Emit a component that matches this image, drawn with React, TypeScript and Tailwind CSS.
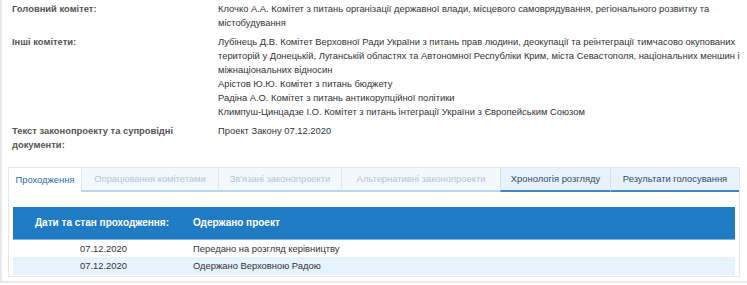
export default function App() {
  const info = [
    {
      label: "Головний комітет:",
      lines: [
        "Клочко А.А. Комітет з питань організації державної влади, місцевого самоврядування, регіонального розвитку та містобудування",
      ],
    },
    {
      label: "Інші комітети:",
      lines: [
        "Лубінець Д.В. Комітет Верховної Ради України з питань прав людини, деокупації та реінтеграції тимчасово окупованих територій у Донецькій, Луганській областях та Автономної Республіки Крим, міста Севастополя, національних меншин і міжнаціональних відносин",
        "Арістов Ю.Ю. Комітет з питань бюджету",
        "Радіна А.О. Комітет з питань антикорупційної політики",
        "Климпуш-Цинцадзе І.О. Комітет з питань інтеграції України з Європейським Союзом",
      ],
    },
    {
      label: "Текст законопроекту та супровідні документи:",
      lines: ["Проект Закону 07.12.2020"],
    },
  ];

  const tabs = [
    { name: "Проходження", w: "w-[72px]", kind: "active" },
    { name: "Опрацювання комітетами", w: "w-[137px]", kind: "off" },
    { name: "Зв'язані законопроекти", w: "w-[123px]", kind: "off" },
    { name: "Альтернативні законопроекти", w: "w-[159px]", kind: "off" },
    { name: "Хронологія розгляду", w: "w-[110px]", kind: "on" },
    { name: "Результати голосування", w: "w-[129px]", kind: "on" },
  ];

  const rows = [
    { date: "07.12.2020", text: "Передано на розгляд керівництву" },
    { date: "07.12.2020", text: "Одержано Верховною Радою" },
  ];

  return (
    <div className="h-[285px] w-[747px] overflow-hidden bg-white font-['Liberation_Sans',Arial,sans-serif] text-[9.4px] leading-[14px]">
      <div className="h-[283px] border-b-2 border-l-2 border-[#e8e8e8] pt-[2px]">
        <div className="flex flex-col gap-[5px] pl-[10px] pr-[4px]">
          {info.map((item) => (
            <div key={item.label} className="grid grid-cols-[206px_1fr]">
              <div className="pr-[36px] font-bold text-[#555]">{item.label}</div>
              <div className="text-[#333]">
                {item.lines.map((l) => (
                  <div key={l}>{l}</div>
                ))}
              </div>
            </div>
          ))}
        </div>

        <div className="ml-[6px] mt-[15px] w-[732px] border border-[#e6e6e6]">
          <div className="flex h-[24px]">
            {tabs.map((t) => (
              <div
                key={t.name}
                className={
                  t.kind === "active"
                    ? `${t.w} flex items-center justify-center bg-white text-[#2a6ea8]`
                    : t.kind === "off"
                    ? `${t.w} flex items-center justify-center border-b-2 border-l border-b-[#b9d5ee] border-l-[#dfe9f3] bg-[#f3f8fd] text-[#b3c5d8]`
                    : `${t.w} flex items-center justify-center border-b-2 border-l border-b-[#3a86c6] border-l-[#d3e3f2] bg-[#e8f2fc] text-[#2e4c68]`
                }
              >
                {t.name}
              </div>
            ))}
          </div>

          <div className="px-[4px] pb-[1px] pt-[15px]">
            <div className="flex h-[33px] items-center border-b border-[#7fb3e0] bg-[#1f7bc3] text-[10px] font-bold text-white">
              <div className="w-[180px] pl-[22px]">Дати та стан проходження:</div>
              <div>Одержано проект</div>
            </div>
            {rows.map((r, i) => (
              <div
                key={i}
                className={`flex items-center text-[#333] ${i % 2 === 1 ? "h-[18px] bg-[#e6f2fc]" : "h-[17px] bg-white"}`}
              >
                <div className="w-[180px] pl-[67px]">{r.date}</div>
                <div>{r.text}</div>
              </div>
            ))}
          </div>
        </div>
      </div>
    </div>
  );
}
